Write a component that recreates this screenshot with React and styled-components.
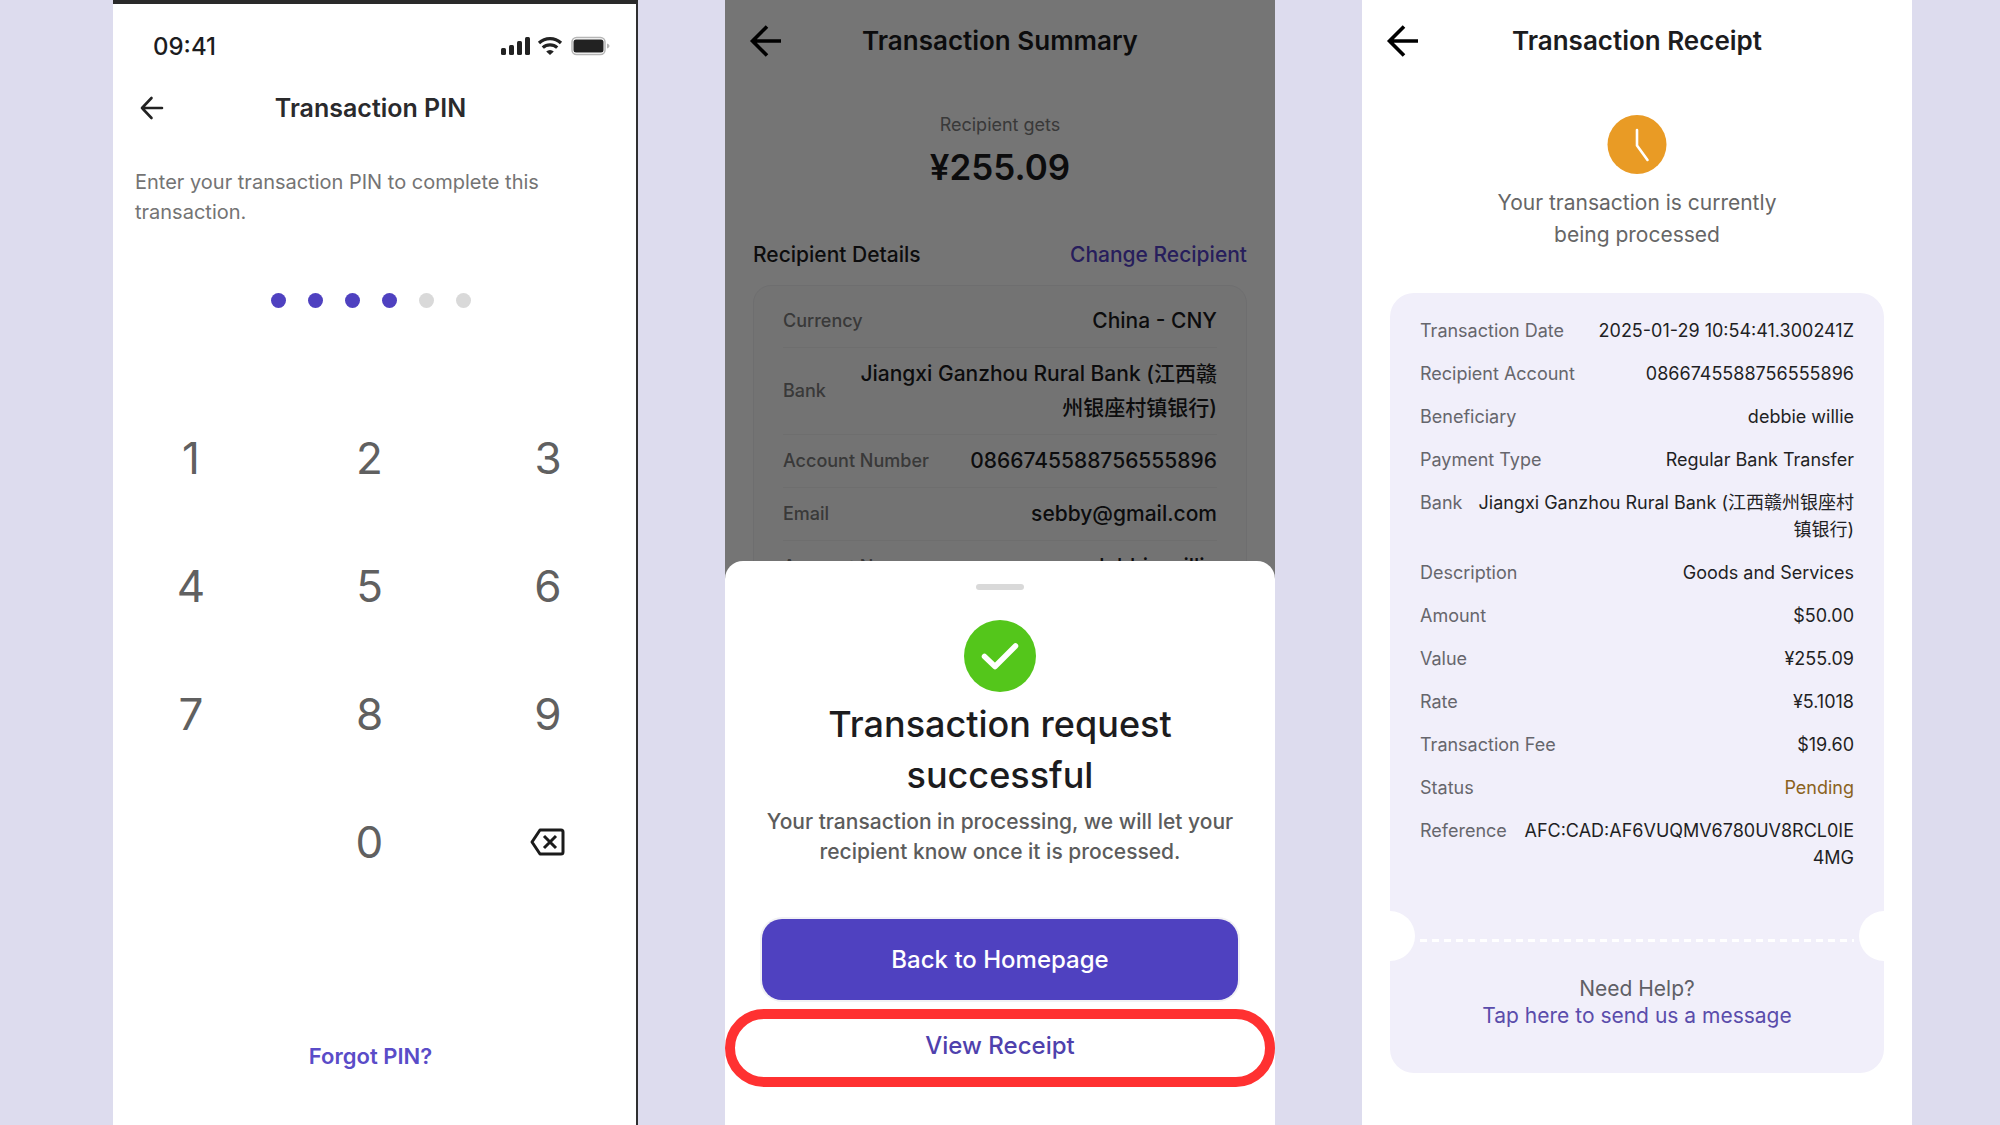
import React from 'react';
import styled, { createGlobalStyle } from 'styled-components';

const summaryRows = [
  { label: 'Currency', value: 'China - CNY' },
  { label: 'Bank', value: 'Jiangxi Ganzhou Rural Bank (江西赣\n州银座村镇银行)' },
  { label: 'Account Number', value: '0866745588756555896' },
  { label: 'Email', value: 'sebby@gmail.com' },
  { label: 'Account Name', value: 'debbie willie' },
];

const receiptRows = [
  { label: 'Transaction Date', value: '2025-01-29 10:54:41.300241Z' },
  { label: 'Recipient Account', value: '0866745588756555896' },
  { label: 'Beneficiary', value: 'debbie willie' },
  { label: 'Payment Type', value: 'Regular Bank Transfer' },
  { label: 'Bank', value: 'Jiangxi Ganzhou Rural Bank (江西赣州银座村\n镇银行)' },
  { label: 'Description', value: 'Goods and Services' },
  { label: 'Amount', value: '$50.00' },
  { label: 'Value', value: '¥255.09' },
  { label: 'Rate', value: '¥5.1018' },
  { label: 'Transaction Fee', value: '$19.60' },
  { label: 'Status', value: 'Pending', color: '#8a6220' },
  { label: 'Reference', value: 'AFC:CAD:AF6VUQMV6780UV8RCL0IE\n4MG' },
];

const keys = ['1', '2', '3', '4', '5', '6', '7', '8', '9', '', '0', 'back'];

const BackArrow = () => (
  <svg width="32" height="32" viewBox="0 0 32 32" fill="none" stroke="#000" strokeWidth="3.6">
    <path d="M32 16H4M18 1.5L3.5 16L18 30.5" />
  </svg>
);

const ThinArrow = () => (
  <svg
    width="24"
    height="24"
    viewBox="0 0 24 24"
    fill="none"
    stroke="#222"
    strokeWidth="2.6"
    strokeLinecap="round"
    strokeLinejoin="round"
  >
    <path d="M22 12H2M11.5 2L2 12l9.5 10" />
  </svg>
);

const StatusIcons = () => (
  <svg width="110" height="20" viewBox="0 0 110 20" fill="none">
    <g fill="#222">
      <rect x="1" y="12" width="5" height="7" rx="1.5" />
      <rect x="9" y="9" width="5" height="10" rx="1.5" />
      <rect x="17" y="5" width="5" height="14" rx="1.5" />
      <rect x="25" y="1" width="5" height="18" rx="1.5" />
      <path d="M50 19l-3.8-3.6a5.5 5.5 0 0 1 7.6 0z" />
      <rect x="73.5" y="3.5" width="30" height="13" rx="2.5" />
    </g>
    <g stroke="#222" strokeWidth="3.2">
      <path d="M39 7a16 16 0 0 1 22 0" />
      <path d="M42.8 11.7a10.5 10.5 0 0 1 14.4 0" />
    </g>
    <rect x="72" y="1.5" width="33" height="17" rx="4.5" stroke="#b5b5b5" strokeWidth="1.5" />
    <path d="M107 7.5v5c1.5-.6 2.5-1.4 2.5-2.5s-1-1.9-2.5-2.5z" fill="#b5b5b5" />
  </svg>
);

const BackspaceIcon = () => (
  <svg width="36" height="28" viewBox="0 0 36 28" fill="none" stroke="#1b1b1b" strokeWidth="3">
    <path d="M10 2h21a2 2 0 0 1 2 2v20a2 2 0 0 1-2 2H10L2 14z" strokeLinejoin="round" />
    <path d="M14 8l12 12M26 8L14 20" />
  </svg>
);

const CheckIcon = () => (
  <svg width="72" height="72" viewBox="0 0 72 72" fill="none">
    <circle cx="36" cy="36" r="36" fill="#54c61b" />
    <path
      d="M20.5 36.5L31 46.5L51.5 26"
      stroke="#fff"
      strokeWidth="5.5"
      strokeLinecap="round"
      strokeLinejoin="round"
    />
  </svg>
);

const ClockIcon = () => (
  <svg width="60" height="59" viewBox="0 0 60 59" fill="none">
    <circle cx="30" cy="29.5" r="29.5" fill="#e99b25" />
    <path
      d="M30 15v15.500l10.500 14.500"
      stroke="#fff"
      strokeWidth="2.6"
      strokeLinecap="round"
      strokeLinejoin="round"
    />
  </svg>
);

const PinScreen = () => (
  <PinPanel>
    <StatusBar>
      <span>09:41</span>
      <StatusIcons />
    </StatusBar>
    <PinBody>
      <PinHeader>
        <IconButton aria-label="Back">
          <ThinArrow />
        </IconButton>
        <PinTitle>Transaction PIN</PinTitle>
      </PinHeader>
      <PinHint>Enter your transaction PIN to complete this transaction.</PinHint>
      <Dots>
        {[0, 1, 2, 3, 4, 5].map((i) => (
          <Dot key={i} $filled={i < 4} />
        ))}
      </Dots>
    </PinBody>
    <Keypad>
      {keys.map((key) => {
        if (key === '') return <span key="empty" />;
        if (key === 'back')
          return (
            <Key key={key} aria-label="Delete">
              <BackspaceIcon />
            </Key>
          );
        return <Key key={key}>{key}</Key>;
      })}
    </Keypad>
    <ForgotRow>
      <ForgotLink href="#forgot">Forgot PIN?</ForgotLink>
    </ForgotRow>
  </PinPanel>
);

const SummaryScreen = () => (
  <Panel>
    <Header>
      <IconButton aria-label="Back">
        <BackArrow />
      </IconButton>
      <Title>Transaction Summary</Title>
    </Header>
    <AmountBlock>
      <span>Recipient gets</span>
      <strong>¥255.09</strong>
    </AmountBlock>
    <SectionHead>
      <h2>Recipient Details</h2>
      <a href="#change">Change Recipient</a>
    </SectionHead>
    <SummaryCard>
      {summaryRows.map((row) => (
        <SummaryRow key={row.label}>
          <dt>{row.label}</dt>
          <dd>{row.value}</dd>
        </SummaryRow>
      ))}
    </SummaryCard>
    <Backdrop />
    <Sheet>
      <Handle />
      <CheckIcon />
      <SheetTitle>
        Transaction request
        <br />
        successful
      </SheetTitle>
      <SheetText>
        Your transaction in processing, we will let your
        <br />
        recipient know once it is processed.
      </SheetText>
      <HomeButton>Back to Homepage</HomeButton>
      <ReceiptButton>View Receipt</ReceiptButton>
    </Sheet>
  </Panel>
);

const ReceiptScreen = () => (
  <Panel>
    <Header>
      <IconButton aria-label="Back">
        <BackArrow />
      </IconButton>
      <Title>Transaction Receipt</Title>
    </Header>
    <Processing>
      <ClockIcon />
      <p>
        Your transaction is currently
        <br />
        being processed
      </p>
    </Processing>
    <Ticket>
      <ReceiptList>
        {receiptRows.map((row) => (
          <ReceiptRow key={row.label} $color={row.color}>
            <dt>{row.label}</dt>
            <dd>{row.value}</dd>
          </ReceiptRow>
        ))}
      </ReceiptList>
      <Tear>
        <Notch $side="left" />
        <Dashes />
        <Notch $side="right" />
      </Tear>
      <Help>
        <span>Need Help?</span>
        <a href="#help">Tap here to send us a message</a>
      </Help>
    </Ticket>
  </Panel>
);

const App = () => (
  <>
    <GlobalStyle />
    <Board>
      <PinScreen />
      <SummaryScreen />
      <ReceiptScreen />
    </Board>
  </>
);

export default App;

const GlobalStyle = createGlobalStyle`
  * {
    box-sizing: border-box;
  }
  body {
    margin: 0;
    background: #dddcee;
    font-family: Inter, 'Noto Sans CJK SC', sans-serif;
    color: #1c1c1e;
  }
  h1, h2, p, dl, dt, dd {
    margin: 0;
  }
  a {
    text-decoration: none;
  }
  button {
    border: none;
    background: none;
    padding: 0;
    font-family: inherit;
    cursor: pointer;
  }
  svg {
    display: block;
    flex-shrink: 0;
  }
`;

const Board = styled.main`
  display: grid;
  grid-template-columns: 525fr 550fr 550fr;
  gap: 87px;
  min-height: 100vh;
  padding: 0 88px 0 113px;
`;

const Panel = styled.section`
  position: relative;
  display: flex;
  flex-direction: column;
  overflow: hidden;
  background: #fff;
`;

const PinPanel = styled(Panel)`
  border-top: 4px solid #2a2a2a;
  border-right: 2px solid #2f2f31;
`;

const IconButton = styled.button`
  display: flex;
  align-items: center;
`;

const StatusBar = styled.div`
  display: flex;
  align-items: center;
  justify-content: space-between;
  height: 40px;
  margin-top: 22px;
  padding: 0 26px 0 40px;
  font-size: 24px;
  font-weight: 500;
`;

const PinBody = styled.div`
  display: flex;
  flex-direction: column;
  padding: 22px 30px 0 22px;
`;

const PinHeader = styled.header`
  display: grid;
  grid-template-columns: 40px 1fr 40px;
  align-items: center;
  height: 40px;
  padding: 0 5px;
`;

const PinTitle = styled.h1`
  font-size: 25px;
  font-weight: 600;
  color: #2a2a2c;
  text-align: center;
`;

const PinHint = styled.p`
  margin-top: 39px;
  font-size: 20px;
  line-height: 30px;
  color: #747474;
`;

const Dots = styled.div`
  display: flex;
  justify-content: center;
  gap: 22px;
  margin-top: 66px;
`;

const Dot = styled.span`
  width: 15px;
  height: 15px;
  border-radius: 50%;
  background: ${(props) => (props.$filled ? '#4f41c0' : '#d9d9d9')};
`;

const Keypad = styled.div`
  display: grid;
  grid-template-columns: repeat(3, 100px);
  grid-auto-rows: 128px;
  justify-content: space-between;
  margin-top: 86px;
  padding: 0 38px 0 28px;
`;

const Key = styled.button`
  display: flex;
  align-items: center;
  justify-content: center;
  font-size: 44px;
  color: #606060;
`;

const ForgotRow = styled.div`
  display: flex;
  justify-content: center;
  margin-top: 134px;
  padding-right: 8px;
`;

const ForgotLink = styled.a`
  font-size: 22px;
  line-height: 32px;
  font-weight: 600;
  color: #5a4cc8;
`;

const Header = styled.header`
  display: grid;
  grid-template-columns: 40px 1fr 40px;
  align-items: center;
  height: 81px;
  padding: 0 24px;
`;

const Title = styled.h1`
  font-size: 26px;
  font-weight: 600;
  text-align: center;
`;

const AmountBlock = styled.div`
  display: flex;
  flex-direction: column;
  align-items: center;
  gap: 5px;
  margin-top: 31px;

  span {
    font-size: 18px;
    line-height: 26px;
    color: #7c7c7c;
  }
  strong {
    font-size: 35px;
    line-height: 48px;
    font-weight: 600;
  }
`;

const SectionHead = styled.div`
  display: flex;
  justify-content: space-between;
  margin-top: 50px;
  padding: 0 28px;
  font-size: 21px;
  line-height: 28px;
  font-weight: 500;

  h2 {
    font-size: inherit;
    font-weight: inherit;
  }
  a {
    color: #5643c8;
  }
`;

const SummaryCard = styled.dl`
  margin: 16px 28px 0;
  padding: 9px 29px;
  border: 1px solid #efeff2;
  border-radius: 18px;
  background: #fbfbfb;
`;

const SummaryRow = styled.div`
  display: flex;
  align-items: center;
  justify-content: space-between;
  padding: 9px 0;
  border-bottom: 1px solid #efeff0;
  font-weight: 500;
  line-height: 34px;

  &:last-child {
    border-bottom: none;
  }
  dt {
    font-size: 18px;
    color: #7c7c7c;
  }
  dd {
    font-size: 21px;
    text-align: right;
    white-space: pre-line;
  }
`;

const Backdrop = styled.div`
  position: absolute;
  inset: 0;
  background: rgba(0, 0, 0, 0.54);
`;

const Sheet = styled.div`
  position: absolute;
  right: 0;
  bottom: 0;
  left: 0;
  display: flex;
  flex-direction: column;
  align-items: center;
  padding: 23px 0 38px;
  border-radius: 18px 18px 0 0;
  background: #fff;
`;

const Handle = styled.div`
  width: 48px;
  height: 6px;
  margin-bottom: 30px;
  border-radius: 3px;
  background: #d9d9d9;
`;

const SheetTitle = styled.h2`
  margin-top: 7px;
  font-size: 36px;
  line-height: 51px;
  font-weight: 500;
  text-align: center;
`;

const SheetText = styled.p`
  margin-top: 6px;
  font-size: 21px;
  line-height: 30px;
  font-weight: 500;
  color: #5c5c5c;
  text-align: center;
`;

const SheetButton = styled.button`
  font-size: 24px;
  font-weight: 500;
`;

const HomeButton = styled(SheetButton)`
  align-self: stretch;
  height: 81px;
  margin: 52px 37px 0;
  border-radius: 20px;
  background: #4f41c0;
  box-shadow: 0 0 0 2px #f1f1f4;
  color: #fff;
`;

const ReceiptButton = styled(SheetButton)`
  align-self: stretch;
  height: 78px;
  margin-top: 9px;
  padding-bottom: 6px;
  border: 10px solid #ff3131;
  border-radius: 40px;
  color: #4f41ad;
`;

const Processing = styled.div`
  display: flex;
  flex-direction: column;
  align-items: center;
  gap: 13px;
  margin-top: 34px;

  p {
    font-size: 21px;
    line-height: 32px;
    color: #666;
    text-align: center;
  }
`;

const Ticket = styled.div`
  margin: 42px 28px 0;
  border-radius: 24px;
  background: #f1effa;
`;

const ReceiptList = styled.dl`
  display: flex;
  flex-direction: column;
  gap: 16px;
  padding: 24px 30px 40px;
`;

const ReceiptRow = styled.div`
  display: flex;
  justify-content: space-between;
  font-size: 18px;
  line-height: 27px;

  dt {
    color: #66666c;
  }
  dd {
    color: ${(props) => props.$color || '#1f1f24'};
    text-align: right;
    white-space: pre-line;
  }
`;

const Tear = styled.div`
  display: flex;
  align-items: center;
  gap: 5px;
`;

const Notch = styled.div`
  width: 25px;
  height: 50px;
  border-radius: ${(props) => (props.$side === 'left' ? '0 25px 25px 0' : '25px 0 0 25px')};
  background: #fff;
`;

const Dashes = styled.div`
  flex: 1;
  height: 3px;
  margin-top: 8px;
  background: repeating-linear-gradient(to right, #fff 0 7px, transparent 7px 12px);
`;

const Help = styled.div`
  display: flex;
  flex-direction: column;
  align-items: center;
  padding: 14px 0 44px;
  font-size: 21px;
  line-height: 27px;
  color: #5f5f66;

  a {
    color: #5a4cab;
  }
`;
